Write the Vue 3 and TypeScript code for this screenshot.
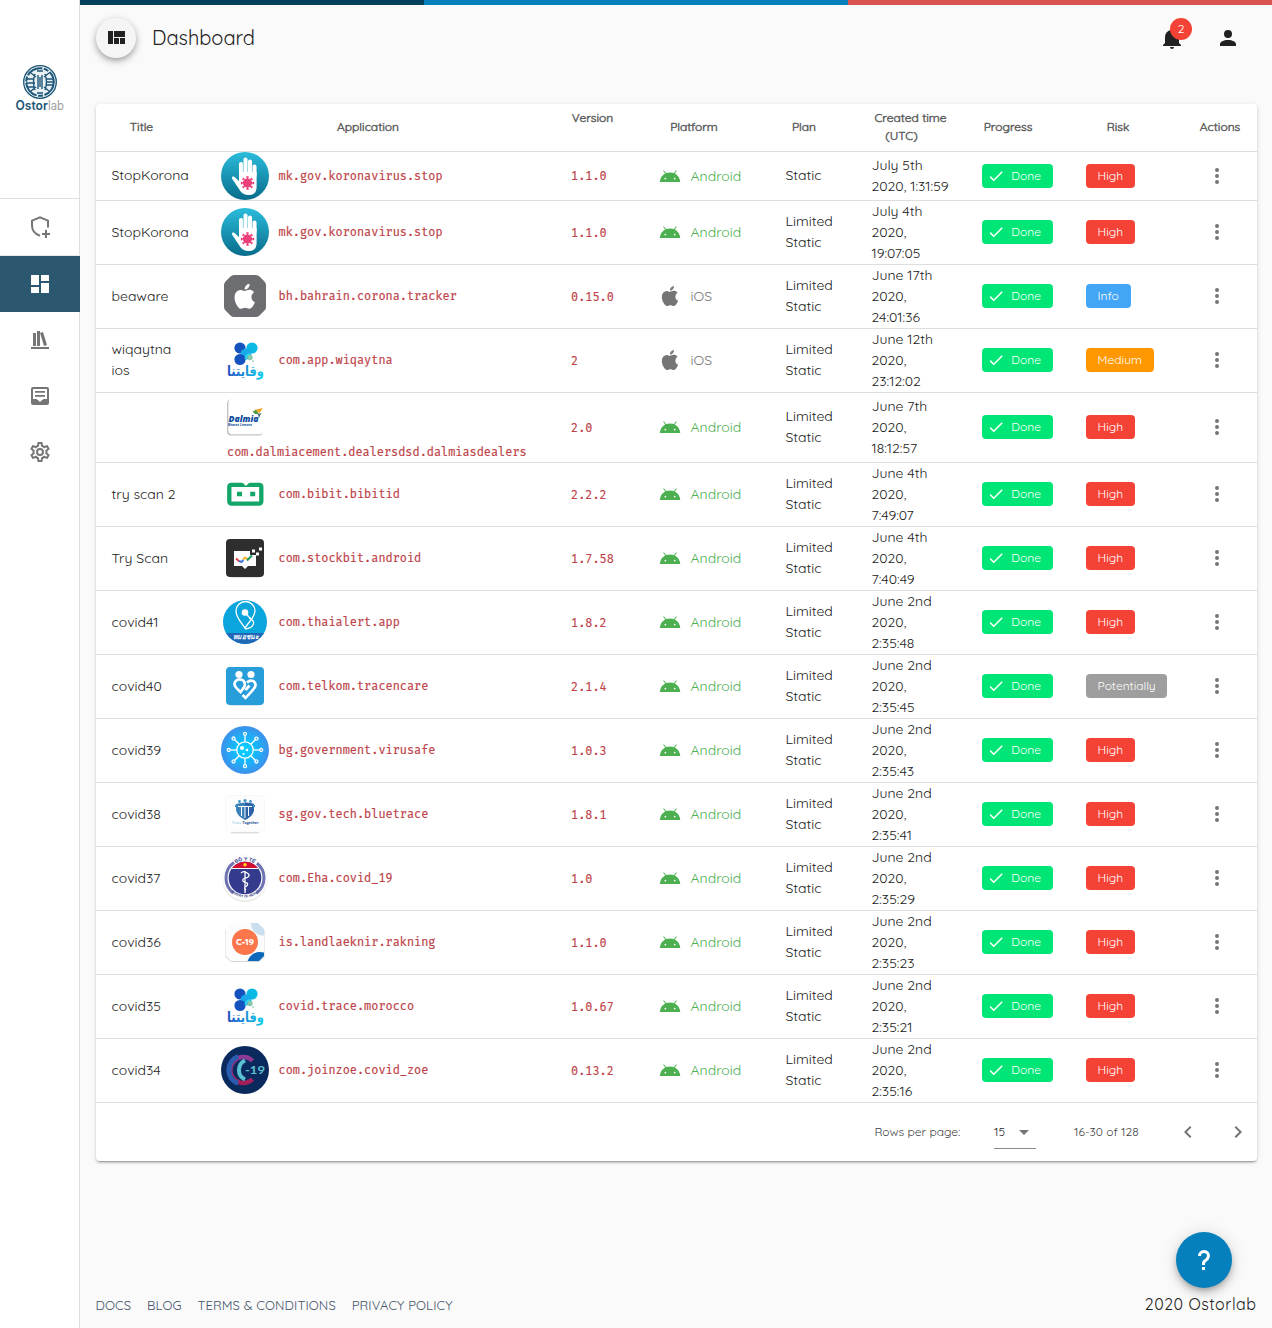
<script setup lang="ts">
interface Scan {
  title: string[]
  logo: string
  app: string
  version: string
  ios?: boolean
  plan?: string[]
  date: string[]
  risk?: string
  wrap?: boolean
}

const limited = ['Limited', 'Static']

const scans: Scan[] = [
  { title: ['StopKorona'], logo: 'stop', app: 'mk.gov.koronavirus.stop', version: '1.1.0', plan: ['Static'], date: ['July 5th', '2020, 1:31:59'] },
  { title: ['StopKorona'], logo: 'stop', app: 'mk.gov.koronavirus.stop', version: '1.1.0', date: ['July 4th', '2020,', '19:07:05'] },
  { title: ['beaware'], logo: 'beaware', app: 'bh.bahrain.corona.tracker', version: '0.15.0', ios: true, date: ['June 17th', '2020,', '24:01:36'], risk: 'Info' },
  { title: ['wiqaytna', 'ios'], logo: 'wiqaytna', app: 'com.app.wiqaytna', version: '2', ios: true, date: ['June 12th', '2020,', '23:12:02'], risk: 'Medium' },
  { title: [], logo: 'dalmia', app: 'com.dalmiacement.dealersdsd.dalmiasdealers', version: '2.0', date: ['June 7th', '2020,', '18:12:57'], wrap: true },
  { title: ['try scan 2'], logo: 'bibit', app: 'com.bibit.bibitid', version: '2.2.2', date: ['June 4th', '2020,', '7:49:07'] },
  { title: ['Try Scan'], logo: 'stockbit', app: 'com.stockbit.android', version: '1.7.58', date: ['June 4th', '2020,', '7:40:49'] },
  { title: ['covid41'], logo: 'thai', app: 'com.thaialert.app', version: '1.8.2', date: ['June 2nd', '2020,', '2:35:48'] },
  { title: ['covid40'], logo: 'telkom', app: 'com.telkom.tracencare', version: '2.1.4', date: ['June 2nd', '2020,', '2:35:45'], risk: 'Potentially' },
  { title: ['covid39'], logo: 'virusafe', app: 'bg.government.virusafe', version: '1.0.3', date: ['June 2nd', '2020,', '2:35:43'] },
  { title: ['covid38'], logo: 'trace', app: 'sg.gov.tech.bluetrace', version: '1.8.1', date: ['June 2nd', '2020,', '2:35:41'] },
  { title: ['covid37'], logo: 'eha', app: 'com.Eha.covid_19', version: '1.0', date: ['June 2nd', '2020,', '2:35:29'] },
  { title: ['covid36'], logo: 'rakning', app: 'is.landlaeknir.rakning', version: '1.1.0', date: ['June 2nd', '2020,', '2:35:23'] },
  { title: ['covid35'], logo: 'wiqaytna', app: 'covid.trace.morocco', version: '1.0.67', date: ['June 2nd', '2020,', '2:35:21'] },
  { title: ['covid34'], logo: 'zoe', app: 'com.joinzoe.covid_zoe', version: '0.13.2', date: ['June 2nd', '2020,', '2:35:16'] },
]

const rays = [0, 45, 90, 135, 180, 225, 270, 315]
</script>

<template>
  <svg class="defs" aria-hidden="true">
    <defs>
      <linearGradient id="gStop" x1="0" y1="0" x2="0" y2="1"><stop offset="0" stop-color="#2bbcdb" /><stop offset="1" stop-color="#096c8b" /></linearGradient>
      <linearGradient id="gWiq" x1="0" y1="0" x2="1" y2="0"><stop offset="0" stop-color="#1b4fc0" /><stop offset="1" stop-color="#10d0ee" /></linearGradient>
      <radialGradient id="gVirus"><stop offset="0" stop-color="#06d3ff" /><stop offset=".45" stop-color="#12b9fb" /><stop offset="1" stop-color="#3d90ea" /></radialGradient>
      <linearGradient id="gZoe" x1="0" y1="0" x2="0" y2="1"><stop offset="0" stop-color="#8b3a97" /><stop offset="1" stop-color="#a11f55" /></linearGradient>
      <clipPath id="cThai"><circle cx="24" cy="24" r="22" /></clipPath>
      <clipPath id="cEha"><circle cx="24" cy="24" r="16.3" /></clipPath>
      <clipPath id="cRak"><path d="M11 5H37L43 11V38L38 43H10L5 38V11z" /></clipPath>
      <symbol id="stop" viewBox="0 0 48 48">
        <circle cx="24" cy="24" r="24" fill="url(#gStop)" />
        <path d="M20 22V12M24.500 22V7.500M29 22V9.500M33.500 24V14.500" stroke="#fff" stroke-width="4.100" stroke-linecap="round" />
        <path d="M22.200 12v9M31.200 13v9" stroke="#9bdbe8" stroke-width=".8" />
        <path d="M18 20H35.600V35Q35.500 43 28 43Q21 43 18 37L11 26.500Q10.500 24 13 24.500L18 29z" fill="#fff" />
        <circle cx="26.500" cy="31" r="4.600" fill="#ec407a" />
        <path v-for="r in rays" :key="r" d="M26.500 31V24.800M25.300 25h2.400" :transform="`rotate(${r} 26.500 31)`" stroke="#ec407a" stroke-width="1.300" />
      </symbol>
      <symbol id="beaware" viewBox="0 0 48 48">
        <path d="M13 3H35Q37 3 38.500 4.500L43.500 9.500Q45 11 45 13V35Q45 37 43.500 38.500L38.500 43.500Q37 45 35 45H13Q11 45 9.500 43.500L4.500 38.500Q3 37 3 35V13Q3 11 4.500 9.500L9.500 4.500Q11 3 13 3z" fill="#6d6e72" />
        <use href="#apple" x="8.700" y="9.300" width="30" height="30" fill="#fff" />
      </symbol>
      <symbol id="apple" viewBox="0 0 24 24">
        <path d="M18.71,19.5C17.88,20.74 17,21.95 15.66,21.97C14.32,22 13.89,21.18 12.37,21.18C10.84,21.18 10.37,21.95 9.1,22C7.79,22.05 6.8,20.68 5.96,19.47C4.25,17 2.94,12.45 4.7,9.39C5.57,7.87 7.13,6.91 8.82,6.88C10.1,6.86 11.32,7.75 12.11,7.75C12.89,7.75 14.37,6.68 15.92,6.84C16.57,6.87 18.39,7.1 19.56,8.82C19.47,8.88 17.39,10.1 17.41,12.63C17.44,15.65 20.06,16.66 20.09,16.67C20.06,16.74 19.67,18.11 18.71,19.5M13,3.5C13.73,2.67 14.94,2.04 15.94,2C16.07,3.17 15.6,4.35 14.9,5.19C14.21,6.04 13.07,6.7 11.95,6.61C11.8,5.46 12.36,4.26 13,3.5Z" />
      </symbol>
      <symbol id="wiqaytna" viewBox="0 0 48 48">
        <circle cx="19" cy="12" r="5.600" fill="#1452bd" /><circle cx="31" cy="12" r="5.600" fill="#0bb9e5" />
        <circle cx="25" cy="18" r="5.500" fill="#19a9e8" /><circle cx="19" cy="23.500" r="5.600" fill="#1452bd" />
        <path d="M24.500 23a5 5 0 0 1 5-5" fill="none" stroke="#27d7ef" stroke-width="2" />
        <circle cx="29" cy="21.500" r="2.700" fill="#86c9aa" /><circle cx="32" cy="25" r=".7" fill="#49b07f" />
        <text x="24.500" y="40" text-anchor="middle" textLength="37" lengthAdjust="spacingAndGlyphs" direction="rtl" font-family="DejaVu Sans" font-weight="700" font-size="14" fill="url(#gWiq)">وقايتنا</text>
      </symbol>
      <symbol id="dalmia" viewBox="0 0 48 48">
        <rect x="6" y="6.500" width="36" height="36" rx="4" fill="#c4c4c4" />
        <rect x="7.400" y="6" width="35" height="35.300" rx="4" fill="#fff" />
        <text x="7.500" y="29" textLength="30" lengthAdjust="spacingAndGlyphs" font-family="Open Sans" font-weight="800" font-style="italic" font-size="9" fill="#0c4a9c">Dalmia</text>
        <text x="7" y="33" textLength="24" lengthAdjust="spacingAndGlyphs" font-family="Open Sans" font-weight="700" font-size="3.600" fill="#0c4a9c">Bharat Cement</text>
        <path d="M33 17L42 15L38.500 20z" fill="#f6a623" /><path d="M31.500 18.500L35 17L38 21L34 21z" fill="#4a9b45" /><path d="M36.500 21l4-1-2.500 5z" fill="#577a83" />
      </symbol>
      <symbol id="bibit" viewBox="0 0 48 48">
        <rect x="8.300" y="14.800" width="32" height="18.800" rx="2" fill="none" stroke="#14a569" stroke-width="4.300" />
        <path d="M20.800 12H29l-4.100 4z" fill="#fff" />
        <path d="M16 21.800h5v4.500h-5zm13.200 0h5v4.500h-5z" fill="#14a569" />
      </symbol>
      <symbol id="stockbit" viewBox="0 0 48 48">
        <path d="M10 6H38L43 11V39L38 43.500H10L5 39V11z" fill="#c9c9c9" />
        <path d="M9 5H39Q43 5 43 9V39Q43 43 39 43H9Q5 43 5 39V9Q5 5 9 5z" fill="#2e2e2e" />
        <path d="M13 17h16v4h6v11h-8l-3 3-3-3h-8V17zM31 15.500h3v3h-3zm4 3h3v3h-3zm3-5h3v3h-3z" fill="#fff" />
        <g fill="none" stroke-width="2"><path d="M15 24.500l3.500 3" stroke="#df4545" /><path d="M18 27l2.500 1 2-2" stroke="#4578dd" /><path d="M22 25.500l2-2 3 2" stroke="#f2b530" /><path d="M26 26.500l5-5" stroke="#1a9c60" /></g>
      </symbol>
      <symbol id="thai" viewBox="0 0 48 48">
        <g clip-path="url(#cThai)"><rect width="48" height="48" fill="#0aa5dc" /><rect y="35" width="48" height="13" fill="#2168b7" /></g>
        <path d="M24 30C19 23 15 19 15 13a9.500 9.500 0 0 1 19 0C34 19 27 25 24 30zM28 20c8 3 5 10-4 11" fill="none" stroke="#fff" stroke-width="1.300" />
        <circle cx="24" cy="14.500" r="3.300" fill="#fff" /><path d="M26 17l4 4" stroke="#fff" stroke-width="1.400" />
        <text x="24.500" y="41" text-anchor="middle" textLength="26" lengthAdjust="spacingAndGlyphs" font-family="DejaVu Sans, sans-serif" font-weight="700" font-style="italic" font-size="7" fill="#fff">หมอชนะ</text>
      </symbol>
      <symbol id="telkom" viewBox="0 0 48 48">
        <path d="M9.500 6H38.500L43 11V39L38.500 43.600H9.500L5 39V11z" fill="#b9d2df" />
        <path d="M9 5H39Q43 5 43 9V39Q43 43 39 43H9Q5 43 5 39V9Q5 5 9 5z" fill="#279dda" />
        <circle cx="18" cy="12.500" r="3.600" fill="#fff" /><circle cx="30" cy="12.500" r="3.600" fill="#fff" />
        <path d="M19.500 30C15 26 13.500 24 13.500 22.500a5.200 5.200 0 0 1 10.400 0C23.900 25 21 28 19.500 30zM26 20.500c4-4 9-1 8.500 3C34 27 28 32 24.500 35.800L21.500 33M24.500 28l4-4.500" fill="none" stroke="#fff" stroke-width="2.700" />
      </symbol>
      <symbol id="virusafe" viewBox="0 0 48 48">
        <circle cx="24" cy="24" r="24" fill="url(#gVirus)" />
        <g fill="none" stroke="#fff" stroke-width="1.300"><circle cx="24" cy="24" r="8.200" />
          <g v-for="r in rays" :key="r" :transform="`rotate(${r} 24 24)`"><path d="M24 15.800V9.500" /><circle cx="24" cy="7.800" r="1.500" /></g>
        </g>
        <circle cx="21" cy="22" r="2.100" fill="#fff" /><circle cx="26" cy="24" r="1.300" fill="#fff" /><circle cx="22.500" cy="28" r="1" fill="#fff" />
      </symbol>
      <symbol id="trace" viewBox="0 0 48 48">
        <path d="M10 42h28v1.300H10z" fill="#cfcfcf" /><rect x="4.500" y="5.500" width="39" height="36.500" rx="4" fill="#fdfdfd" stroke="#f5f5f5" stroke-width=".800" />
        <path d="M15 14Q24 11 33 14V20Q32 26 24 30Q16 26 15 20z" fill="#3e80b8" /><path d="M24 12.500Q29 12.500 33 14V20Q32 26 24 30z" fill="#2c61a7" />
        <path d="M20.500 17v9M24 16v12M27.500 17v9M17 16.500h14" stroke="#fff" stroke-width="1" />
        <g fill="#4397c8"><circle cx="18.500" cy="11.500" r="1.400" /><circle cx="24" cy="10.500" r="1.600" /><circle cx="29.500" cy="11.500" r="1.400" /><circle cx="15" cy="16" r="1.200" /><circle cx="33" cy="16" r="1.200" /></g>
        <text x="11" y="34" textLength="10" lengthAdjust="spacingAndGlyphs" font-family="Open Sans" font-size="4" fill="#7bb7db">Trace</text>
        <text x="21.500" y="34" textLength="16" lengthAdjust="spacingAndGlyphs" font-family="Open Sans" font-weight="700" font-size="4" fill="#294f94">Together</text>
      </symbol>
      <symbol id="eha" viewBox="0 0 48 48">
        <circle cx="24" cy="25" r="23" fill="#e9e9e7" /><circle cx="24" cy="23.500" r="23" fill="#fbfbfb" />
        <circle cx="24" cy="24" r="19" fill="none" stroke="#6f73b2" stroke-width="3" stroke-dasharray="35 24.690" stroke-dashoffset="17.500" />
        <g clip-path="url(#cEha)"><rect width="48" height="48" fill="#343b8c" /><rect width="48" height="14" fill="#d50d31" /><rect y="14" width="48" height="1" fill="#fff" /></g>
        <circle cx="24" cy="10.800" r="1.700" fill="#ffd51c" />
        <path d="M24 17V39M20 19q2-2 4-1 5 2 4 4-1 2-4 2-3 1-2 3 1 2 4 2 2 2-2 4-1 2 1 3" fill="none" stroke="#fff" stroke-width="1.300" />
        <path id="pTop" d="M13.500 10.500Q24 2.500 34.500 10.500" fill="none" /><path id="pBottom" d="M9 37Q24 50 39 37" fill="none" />
        <text font-family="Liberation Sans" font-weight="700" font-size="5" fill="#343b8c"><textPath href="#pTop" startOffset="50%" text-anchor="middle">BỘ Y TẾ</textPath></text>
        <text font-family="Liberation Sans" font-weight="700" font-size="3.400" fill="#343b8c"><textPath href="#pBottom" startOffset="50%" text-anchor="middle">MINISTRY OF HEALTH</textPath></text>
      </symbol>
      <symbol id="rakning" viewBox="0 0 48 48">
        <path d="M11 6H37L43.500 12V39L38 44H10L4.500 39V12z" fill="#d6d6d6" />
        <g clip-path="url(#cRak)"><rect width="48" height="48" fill="#fcfcfc" /><circle cx="42" cy="5.500" r="12" fill="#c9dff0" /><circle cx="39" cy="47" r="13" fill="#0c68bb" /></g>
        <circle cx="24" cy="24" r="13" fill="#fb764a" />
        <text x="24" y="27.400" text-anchor="middle" textLength="18" lengthAdjust="spacingAndGlyphs" font-family="Quicksand, Lato" font-weight="700" font-size="9" fill="#fff" stroke="#fff" stroke-width=".2">C-19</text>
      </symbol>
      <symbol id="zoe" viewBox="0 0 48 48">
        <circle cx="24" cy="24" r="24" fill="#0a2a5e" />
        <path d="M31.500 14.800A13 13 0 1 0 31.500 33.200" fill="none" stroke="url(#gZoe)" stroke-width="4.500" />
        <path d="M17 10.500A14.500 14.500 0 0 0 17 37.500" fill="none" stroke="#2a5cb0" stroke-width="5" />
        <path d="M24 14.500A10.500 10.500 0 0 0 24 33.500" fill="none" stroke="#5bc1d2" stroke-width="4" />
        <text x="24" y="27.800" textLength="20" lengthAdjust="spacingAndGlyphs" font-family="Lato" font-weight="700" font-size="12" fill="#5bc1d2">-19</text>
      </symbol>
    </defs>
  </svg>

  <div class="shell">
    <aside class="rail">
      <div class="brand">
        <svg width="50" height="48" viewBox="0 0 50 48">
          <circle cx="25" cy="18" r="16.300" fill="#eaf1f5" stroke="#1c5576" stroke-width="1.300" />
          <circle cx="25" cy="18" r="13.800" fill="none" stroke="#1c5576" stroke-width="2" stroke-dasharray="17 1.500 5 1.500" />
          <path d="M23 11v14M27 11v14M25 13v10M20 10q-3 8 0 16M30 10q3 8 0 16M12 15h7M11 19h9M13 23h6M16 9l5 4M34 9l-5 4M16 27l5-4M34 27l-5-4M31 15h7M31 18h8M31 21h7M22 7h6M22 29h6" fill="none" stroke="#1c5576" stroke-width="1.400" />
          <text x="0.500" y="45.500" textLength="32.300" lengthAdjust="spacingAndGlyphs" font-family="Inter" font-weight="600" font-size="12.500" fill="#1c5576">Ostor</text>
          <text x="33" y="45.500" textLength="16" lengthAdjust="spacingAndGlyphs" font-family="Inter" font-size="12.500" fill="#a0a0a0">lab</text>
        </svg>
      </div>
      <nav>
        <a class="nav"><svg class="i24" viewBox="0 0 24 24"><path d="M20 13V6.300L12 3L4 6.300V11Q4 18.500 12 21.300" transform="translate(0 -.6)" fill="none" stroke="#757575" stroke-width="2" /><path d="M17 15h2v3h3v2h-3v3h-2v-3h-3v-2h3z" /></svg></a>
        <a class="nav active"><svg class="i24" viewBox="0 0 24 24"><path d="M13,3V9H21V3M13,21H21V11H13M3,21H11V15H3M3,13H11V3H3V13Z" /></svg></a>
        <a class="nav"><svg class="i24" viewBox="0 0 24 24"><path d="M9 3V18H12V3H9M12 5L16 18L19 17L15 4L12 5M5 5V18H8V5H5M3 19V21H21V19H3Z" /></svg></a>
        <a class="nav"><svg class="i24" viewBox="0 0 24 24"><path fill-rule="evenodd" d="M5 3H19A2 2 0 0 1 21 5V19A2 2 0 0 1 19 21H5A2 2 0 0 1 3 19V5A2 2 0 0 1 5 3M5 5V15H8.500Q9 16 10.200 16.200L12 18L13.800 16.200Q15 16 15.500 15H19V5zM7 7H17V8.800H7zM7 11H17V12.800H7z" /></svg></a>
        <a class="nav"><svg class="i24" viewBox="0 0 24 24"><path d="M12,8A4,4 0 0,1 16,12A4,4 0 0,1 12,16A4,4 0 0,1 8,12A4,4 0 0,1 12,8M12,10A2,2 0 0,0 10,12A2,2 0 0,0 12,14A2,2 0 0,0 14,12A2,2 0 0,0 12,10M10,22C9.75,22 9.54,21.82 9.5,21.58L9.13,18.93C8.5,18.68 7.96,18.34 7.44,17.94L4.95,18.95C4.73,19.03 4.46,18.95 4.34,18.73L2.34,15.27C2.21,15.05 2.27,14.78 2.46,14.63L4.57,12.97L4.5,12L4.57,11L2.46,9.37C2.27,9.22 2.21,8.95 2.34,8.73L4.34,5.27C4.46,5.05 4.73,4.96 4.95,5.05L7.44,6.05C7.96,5.66 8.5,5.32 9.13,5.07L9.5,2.42C9.54,2.18 9.75,2 10,2H14C14.25,2 14.46,2.18 14.5,2.42L14.87,5.07C15.5,5.32 16.04,5.66 16.56,6.05L19.05,5.05C19.27,4.96 19.54,5.05 19.66,5.27L21.66,8.73C21.79,8.95 21.73,9.22 21.54,9.37L19.43,11L19.5,12L19.43,13L21.54,14.63C21.73,14.78 21.79,15.05 21.66,15.27L19.66,18.73C19.54,18.95 19.27,19.04 19.05,18.95L16.56,17.95C16.04,18.34 15.5,18.68 14.87,18.93L14.5,21.58C14.46,21.82 14.25,22 14,22H10M11.25,4L10.88,6.61C9.68,6.86 8.62,7.5 7.85,8.39L5.44,7.35L4.69,8.65L6.8,10.2C6.4,11.37 6.4,12.64 6.8,13.8L4.68,15.36L5.43,16.66L7.86,15.62C8.63,16.5 9.68,17.14 10.87,17.38L11.24,20H12.76L13.13,17.39C14.32,17.14 15.37,16.5 16.14,15.62L18.57,16.66L19.32,15.36L17.2,13.81C17.6,12.64 17.6,11.37 17.2,10.2L19.31,8.65L18.56,7.35L16.15,8.39C15.38,7.5 14.32,6.86 13.12,6.62L12.75,4H11.25Z" /></svg></a>
      </nav>
    </aside>

    <div class="page">
      <div class="stripes"><i /><i /><i /></div>
      <header class="bar">
        <button class="round"><svg class="i24" viewBox="0 0 24 24"><path d="M10 18h5v-6h-5v6zm-6 0h5V5H4v13zm12 0h5v-6h-5v6zM10 5v6h11V5H10z" /></svg></button>
        <h1>Dashboard</h1>
        <div class="bell">
          <svg class="i24" viewBox="0 0 24 24"><path d="M21,19V20H3V19L5,17V11C5,7.9 7.03,5.17 10,4.29C10,4.19 10,4.1 10,4A2,2 0 0,1 12,2A2,2 0 0,1 14,4C14,4.1 14,4.19 14,4.29C16.97,5.17 19,7.9 19,11V17L21,19M14,21A2,2 0 0,1 12,23A2,2 0 0,1 10,21" /></svg>
          <span class="badge">2</span>
        </div>
        <svg class="i24" viewBox="0 0 24 24"><path d="M12,4A4,4 0 0,1 16,8A4,4 0 0,1 12,12A4,4 0 0,1 8,8A4,4 0 0,1 12,4M12,14C16.42,14 20,15.79 20,18V20H4V18C4,15.79 7.58,14 12,14Z" /></svg>
      </header>

      <section class="card">
        <div class="head">
          <span>Title</span><span>Application</span><span class="up">Version</span><span>Platform</span><span>Plan</span><span>Created time<br><span class="utc">(UTC)</span></span><span>Progress</span><span>Risk</span><span>Actions</span>
        </div>
        <div v-for="(s, n) in scans" :key="n" class="row" :class="{ first: n === 0, tall: s.wrap }">
          <div class="title"><div v-for="t in s.title" :key="t">{{ t }}</div></div>
          <div class="app" :class="{ wrap: s.wrap }">
            <svg width="48" height="48"><use :href="'#' + s.logo" width="48" height="48" /></svg>
            <code>{{ s.app }}</code>
          </div>
          <div><code>{{ s.version }}</code></div>
          <div class="platform" :class="{ ios: s.ios }">
            <svg v-if="s.ios" class="i24"><use href="#apple" width="24" height="24" /></svg>
            <svg v-else class="i24" viewBox="-1.500 -1.500 24 24"><path d="M.2 16.500Q1 10.300 5.700 8L3.700 5.200L4.400 4.800L6.500 7.600Q10.500 6.200 14.500 7.600L16.600 4.800L17.300 5.200L15.300 8Q20 10.300 20.800 16.500zM5.800 12.200a.9.900 0 1 0 0 1.800.9.900 0 0 0 0-1.800m9.400 0a.9.900 0 1 0 0 1.800.9.900 0 0 0 0-1.800" fill-rule="evenodd" /></svg>
            <span>{{ s.ios ? 'iOS' : 'Android' }}</span>
          </div>
          <div class="plan"><div v-for="p in s.plan ?? limited" :key="p">{{ p }}</div></div>
          <div class="date"><div v-for="d in s.date" :key="d">{{ d }}</div></div>
          <div class="chipcell">
            <span class="chip done"><svg width="18" height="18" viewBox="0 0 24 24"><path d="M21,7L9,19L3.500,13.500L4.910,12.090L9,16.170L19.590,5.590L21,7Z" /></svg>Done</span>
          </div>
          <div class="chipcell"><span class="chip" :class="(s.risk ?? 'High').toLowerCase()">{{ s.risk ?? 'High' }}</span></div>
          <div class="more"><svg class="i24" viewBox="0 0 24 24"><path d="M12 4a2 2 0 1 0 0 4 2 2 0 0 0 0-4m0 6a2 2 0 1 0 0 4 2 2 0 0 0 0-4m0 6a2 2 0 1 0 0 4 2 2 0 0 0 0-4" /></svg></div>
        </div>
        <div class="pager">
          <span class="rpp">Rows per page:</span>
          <span class="select">15<svg class="i24" viewBox="0 0 24 24"><path d="M7 10l5 5 5-5z" /></svg></span>
          <span class="range">16-30 of 128</span>
          <svg class="i24 prev" viewBox="0 0 24 24"><path d="M15.410,16.580L10.830,12L15.410,7.410L14,6L8,12L14,18L15.410,16.580Z" /></svg>
          <svg class="i24" viewBox="0 0 24 24"><path d="M8.590,16.580L13.170,12L8.590,7.410L10,6L16,12L10,18L8.590,16.580Z" /></svg>
        </div>
      </section>

      <footer>
        <nav><a>DOCS</a><a>BLOG</a><a>TERMS &amp; CONDITIONS</a><a>PRIVACY POLICY</a></nav>
        <span class="copy">2020 Ostorlab</span>
      </footer>
      <button class="help"><svg class="i24" viewBox="0 0 24 24"><path d="M10,19H13V22H10V19M12,2C17.35,2.22 19.68,7.62 16.5,11.67C15.67,12.67 14.33,13.33 13.67,14.17C13,15 13,16 13,17H10C10,15.33 10,13.92 10.67,12.92C11.33,11.92 12.67,11.33 13.5,10.67C15.92,8.43 15.32,5.26 12,5A3,3 0 0,0 9,8H6A6,6 0 0,1 12,2Z" /></svg></button>
    </div>
  </div>
</template>

<style>
body { margin: 0; background: #fafafa; }
</style>

<style scoped>
* { box-sizing: border-box; }
.defs { position: absolute; width: 0; height: 0; }
.shell { display: flex; width: 1272px; height: 1328px; overflow: hidden; background: #fafafa; color: #212121; font: 400 14px/21px Quicksand, Lato, sans-serif; }
svg { display: block; flex: none; }
.i24 { width: 24px; height: 24px; fill: currentColor; }
button { border: 0; padding: 0; font: inherit; }
.rail { width: 80px; background: #fff; border-right: 1px solid #dedede; flex: none; }
.brand { height: 199px; border-bottom: 1px solid #dedede; padding: 64px 0 0 15px; }
.nav { display: flex; height: 56px; width: 80px; align-items: center; justify-content: center; color: #757575; }
.nav:first-child { height: 57px; border-bottom: 1px solid #e8e8e8; }
.nav.active { background: #2b576f; color: #fff; }
.page { flex: 1; min-width: 0; position: relative; display: flex; flex-direction: column; }
.stripes { display: flex; width: 1192px; height: 5px; }
.stripes i { background: #03405c; width: 344px; }
.stripes i:nth-child(2) { background: #0580bc; width: 424px; }
.stripes i:nth-child(3) { background: #d9534f; width: 424px; }
.bar { display: flex; align-items: center; height: 66px; padding: 0 32px 0 16px; color: #212121; }
.round { width: 40px; height: 40px; border-radius: 50%; background: #f5f5f5; color: #212121; display: grid; place-items: center; box-shadow: 0 3px 5px -1px #0003, 0 4px 8px #00000024, 0 1px 8px #0000001f; }
h1 { margin: -2px auto 0 16px; font-size: 20px; font-weight: 400; }
.bell { position: relative; margin-right: 32px; }
.badge { position: absolute; left: 10px; top: -8px; width: 22px; height: 22px; border-radius: 50%; background: #f44336; color: #fff; text-align: center; font-size: 12px; line-height: 22px; }
.card { margin: 33px 0 0 16px; width: 1161px; height: 1057px; background: #fff; border-radius: 4px; box-shadow: 0 3px 1px -2px #0003, 0 2px 2px #00000024, 0 1px 5px #0000001f; }
.head { display: grid; grid-template-columns: 91px 362px 87px 116px 104px 109px 86px 134px 70px; height: 48px; padding-bottom: 2px; border-bottom: 1px solid #dedede; align-items: center; text-align: center; font-size: 12px; line-height: 18px; font-weight: 400; -webkit-text-stroke: .5px #616161; color: #616161; }
.up { transform: translateY(-9px); }
.utc { padding-right: 18px; }
.row { display: grid; grid-template-columns: 109px 350px 89px 126px 86px 110px 104px 130px 57px; height: 64px; border-bottom: 1px solid #dedede; align-items: center; }
.row > * { padding-left: 16px; }
.first { height: 49px; }
.tall { height: 70px; }
.title, .plan, .chip, .more, .app svg, .platform svg { position: relative; top: -.4px; }
.title, .date, .plan { white-space: nowrap; margin-left: -.5px; }
.app { display: flex; align-items: center; gap: 9.5px; }
.wrap { display: block; align-self: start; }
.wrap code { display: block; margin: 1px 0 -2px 6px; }
code { font: 400 11.9px/21px "Fira Mono", "DejaVu Sans Mono", monospace; -webkit-text-stroke: .2px #bd4147; color: #bd4147; white-space: nowrap; }
.row > .platform { display: flex; align-items: center; gap: 8.500px; padding-left: 14px; color: #4caf50; }
.row > .ios { color: #757575; }
.chipcell { display: flex; }
.chip { display: inline-flex; align-items: center; height: 24px; line-height: 20px; padding: 0 11.6px; border-radius: 4px; color: #fff; font-size: 12px; }
.done { background: #00e676; width: 71px; padding: 0 0 0 5px; gap: 6.300px; }
.done svg { fill: #fff; }
.high { background: #f44336; width: 49px; }
.info { background: #42a5f5; width: 45px; }
.medium { background: #ff9800; width: 68px; }
.potentially { background: #9e9e9e; width: 81px; }
.row > .more { color: #757575; padding-left: 5px; }
.pager { display: flex; align-items: center; height: 58px; font-size: 12px; color: #424242; padding: 0 7px 0 778.400px; }
.rpp { width: 119.600px; white-space: nowrap; margin-top: -1px; }
.select { display: flex; align-items: center; justify-content: space-between; width: 42px; height: 33px; margin-top: 1px; padding-bottom: 1px; border-bottom: 1px solid #8c8c8c; color: #212121; }
.select svg { color: #757575; }
.range { margin: -1px auto 0 38px; }
.prev { margin-right: 26px; }
.pager > svg { color: #757575; }
footer { margin-top: auto; height: 46px; padding: 0 15.500px; display: flex; align-items: center; justify-content: space-between; font-size: 13px; color: #44546a; }
footer nav { display: flex; gap: 15.800px; letter-spacing: .12px; }
.copy { font-size: 16px; letter-spacing: .5px; color: #212121; margin-top: -2px; }
.help { position: absolute; left: 1096px; top: 1232px; width: 56px; height: 56px; border-radius: 50%; background: #0580bc; color: #fff; display: grid; place-items: center; box-shadow: 0 3px 5px -1px #0003, 0 6px 10px #00000024, 0 1px 18px #0000001f; }
</style>
